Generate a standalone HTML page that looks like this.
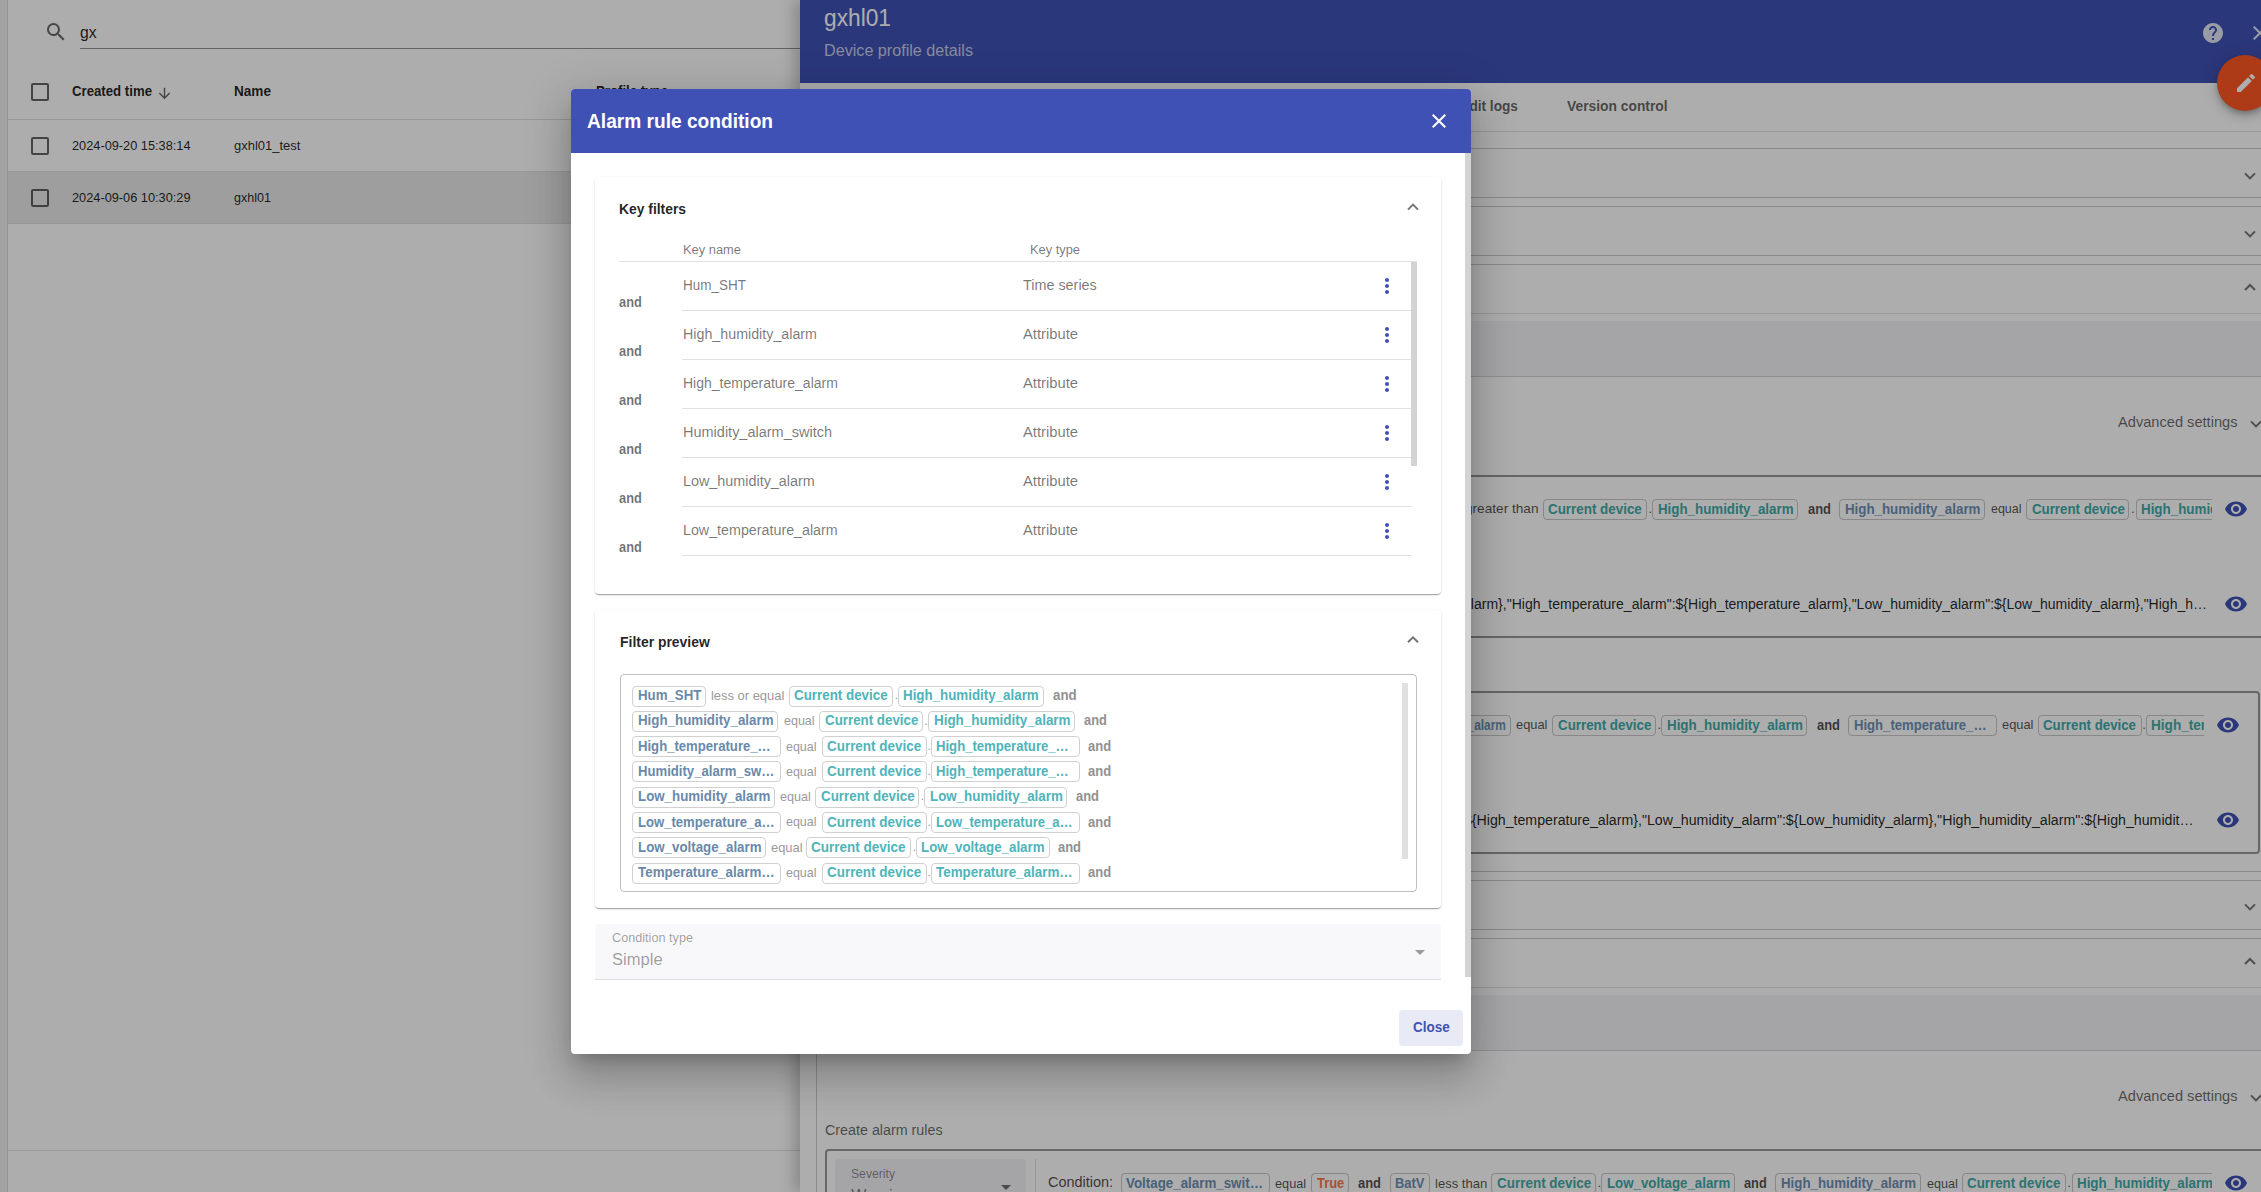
<!DOCTYPE html>
<html><head><meta charset="utf-8"><style>
html,body{margin:0;padding:0;}
body{width:2261px;height:1192px;overflow:hidden;position:relative;background:#fff;font-family:"Liberation Sans",sans-serif;}
.a{position:absolute;box-sizing:border-box;}
.t{position:absolute;white-space:nowrap;}
</style></head><body>
<div class="a" style="left:0px;top:0px;width:7px;height:1192px;background:#f0f0f0"></div><div class="a" style="left:7px;top:0px;width:1px;height:1192px;background:#dcdcdc"></div><svg class="a" style="left:44px;top:20px;" width="24" height="24" viewBox="0 0 24 24"><path fill="rgba(0,0,0,0.6)" d="M15.5 14h-.79l-.28-.27A6.471 6.471 0 0 0 16 9.5 6.5 6.5 0 1 0 9.5 16c1.61 0 3.09-.59 4.23-1.57l.27.28v.79l5 4.99L20.49 19l-4.99-5zm-6 0C7.01 14 5 11.99 5 9.5S7.01 5 9.5 5 14 7.01 14 9.5 11.99 14 9.5 14z"/></svg><div class="t" style="left:80.4px;top:21.8px;font-size:17px;line-height:21px;color:rgba(0,0,0,0.87);transform:scaleX(0.9245);transform-origin:0 0;">gx</div><div class="a" style="left:80px;top:48px;width:720px;height:1px;background:rgba(0,0,0,0.42)"></div><div class="a" style="left:31px;top:83px;width:18px;height:18px;border:2px solid rgba(0,0,0,0.6);border-radius:2px"></div><div class="t" style="left:72.2px;top:82.4px;font-size:14px;line-height:18px;color:rgba(0,0,0,0.87);font-weight:bold;transform:scaleX(0.9433);transform-origin:0 0;">Created time</div><svg class="a" style="left:156px;top:85px;" width="17" height="17" viewBox="0 0 24 24"><path fill="rgba(0,0,0,0.6)" d="M20 12l-1.41-1.41L13 16.17V4h-2v12.17l-5.58-5.59L4 12l8 8 8-8z"/></svg><div class="t" style="left:234.0px;top:82.4px;font-size:14px;line-height:18px;color:rgba(0,0,0,0.87);font-weight:bold;transform:scaleX(0.9703);transform-origin:0 0;">Name</div><div class="t" style="left:596.0px;top:82.4px;font-size:14px;line-height:18px;color:rgba(0,0,0,0.87);font-weight:bold;transform:scaleX(0.9443);transform-origin:0 0;">Profile type</div><div class="a" style="left:8px;top:119px;width:792px;height:1px;background:rgba(0,0,0,0.12)"></div><div class="a" style="left:31px;top:137px;width:18px;height:18px;border:2px solid rgba(0,0,0,0.6);border-radius:2px"></div><div class="t" style="left:72.2px;top:137.1px;font-size:13.7px;line-height:17px;color:rgba(0,0,0,0.87);transform:scaleX(0.9323);transform-origin:0 0;">2024-09-20 15:38:14</div><div class="t" style="left:234.0px;top:137.1px;font-size:13.7px;line-height:17px;color:rgba(0,0,0,0.87);transform:scaleX(0.9476);transform-origin:0 0;">gxhl01_test</div><div class="a" style="left:8px;top:171px;width:792px;height:1px;background:rgba(0,0,0,0.12)"></div><div class="a" style="left:8px;top:172px;width:792px;height:51px;background:#e9e9e9"></div><div class="a" style="left:31px;top:189px;width:18px;height:18px;border:2px solid rgba(0,0,0,0.6);border-radius:2px"></div><div class="t" style="left:72.2px;top:189.3px;font-size:13.7px;line-height:17px;color:rgba(0,0,0,0.87);transform:scaleX(0.9323);transform-origin:0 0;">2024-09-06 10:30:29</div><div class="t" style="left:234.0px;top:189.3px;font-size:13.7px;line-height:17px;color:rgba(0,0,0,0.87);transform:scaleX(0.9165);transform-origin:0 0;">gxhl01</div><div class="a" style="left:8px;top:223px;width:792px;height:1px;background:rgba(0,0,0,0.12)"></div><div class="a" style="left:8px;top:1150px;width:792px;height:1px;background:rgba(0,0,0,0.12)"></div><div class="a" style="left:800px;top:0px;width:1461px;height:1192px;background:#fff;box-shadow:-6px 0 14px rgba(0,0,0,0.22)"></div><div class="a" style="left:800px;top:0px;width:1461px;height:83px;background:#3f51b5"></div><div class="t" style="left:824.2px;top:3.6px;font-size:23px;line-height:29px;color:#fff;transform:scaleX(0.9885);transform-origin:0 0;">gxhl01</div><div class="t" style="left:824.0px;top:41.1px;font-size:16px;line-height:20px;color:rgba(255,255,255,0.72);transform:scaleX(1.0093);transform-origin:0 0;">Device profile details</div><svg class="a" style="left:2201px;top:21px;" width="24" height="24" viewBox="0 0 24 24"><path fill="rgba(255,255,255,0.85)" d="M12 2C6.48 2 2 6.48 2 12s4.48 10 10 10 10-4.48 10-10S17.52 2 12 2zm1 17h-2v-2h2v2zm2.07-7.75l-.9.92C13.45 12.9 13 13.5 13 15h-2v-.5c0-1.1.45-2.1 1.17-2.83l1.24-1.26c.37-.36.59-.86.59-1.41 0-1.1-.9-2-2-2s-2 .9-2 2H8c0-2.21 1.79-4 4-4s4 1.79 4 4c0 .88-.36 1.68-.93 2.25z"/></svg><svg class="a" style="left:2248px;top:21px;" width="24" height="24" viewBox="0 0 24 24"><path fill="rgba(255,255,255,0.85)" d="M19 6.41L17.59 5 12 10.59 6.41 5 5 6.41 10.59 12 5 17.59 6.41 19 12 13.41 17.59 19 19 17.59 13.41 12z"/></svg><div class="a" style="left:800px;top:131px;width:1461px;height:1px;background:rgba(0,0,0,0.12)"></div><div class="t" style="right:743.3px;top:97.2px;font-size:14.5px;line-height:18px;color:rgba(0,0,0,0.62);font-weight:bold;transform:scaleX(0.94);transform-origin:100% 0">Audit logs</div><div class="t" style="left:1566.6px;top:97.2px;font-size:14.5px;line-height:18px;color:rgba(0,0,0,0.62);font-weight:bold;transform:scaleX(0.9531);transform-origin:0 0;">Version control</div><div class="a" style="left:816px;top:148px;width:1445px;height:1px;background:rgba(0,0,0,0.2)"></div><div class="a" style="left:816px;top:197px;width:1445px;height:1px;background:rgba(0,0,0,0.2)"></div><svg class="a" style="left:0;top:0;overflow:visible" width="1" height="1"><polyline points="2245,173.4 2250,178.4 2255,173.4" fill="none" stroke="rgba(0,0,0,0.54)" stroke-width="2"/></svg><div class="a" style="left:816px;top:148px;width:1px;height:49px;background:rgba(0,0,0,0.2)"></div><div class="a" style="left:816px;top:206px;width:1445px;height:1px;background:rgba(0,0,0,0.2)"></div><div class="a" style="left:816px;top:255px;width:1445px;height:1px;background:rgba(0,0,0,0.2)"></div><svg class="a" style="left:0;top:0;overflow:visible" width="1" height="1"><polyline points="2245,231.4 2250,236.4 2255,231.4" fill="none" stroke="rgba(0,0,0,0.54)" stroke-width="2"/></svg><div class="a" style="left:816px;top:206px;width:1px;height:49px;background:rgba(0,0,0,0.2)"></div><div class="a" style="left:816px;top:880px;width:1445px;height:1px;background:rgba(0,0,0,0.2)"></div><div class="a" style="left:816px;top:929px;width:1445px;height:1px;background:rgba(0,0,0,0.2)"></div><svg class="a" style="left:0;top:0;overflow:visible" width="1" height="1"><polyline points="2245,904.4 2250,909.4 2255,904.4" fill="none" stroke="rgba(0,0,0,0.54)" stroke-width="2"/></svg><div class="a" style="left:816px;top:880px;width:1px;height:49px;background:rgba(0,0,0,0.2)"></div><div class="a" style="left:816px;top:264px;width:1445px;height:1px;background:rgba(0,0,0,0.2)"></div><div class="a" style="left:816px;top:313px;width:1445px;height:1px;background:rgba(0,0,0,0.12)"></div><svg class="a" style="left:0;top:0;overflow:visible" width="1" height="1"><polyline points="2245,290.0 2250,285.0 2255,290.0" fill="none" stroke="rgba(0,0,0,0.54)" stroke-width="2"/></svg><div class="a" style="left:816px;top:264px;width:1px;height:607px;background:rgba(0,0,0,0.2)"></div><div class="a" style="left:825px;top:321px;width:1436px;height:56px;background:#f3f3f6;border-bottom:1px solid rgba(0,0,0,0.12)"></div><div class="t" style="left:2117.5px;top:412.3px;font-size:15px;line-height:19px;color:rgba(0,0,0,0.6);transform:scaleX(0.9749);transform-origin:0 0;">Advanced settings</div><svg class="a" style="left:0;top:0;overflow:visible" width="1" height="1"><polyline points="2251,421.4 2256,426.4 2261,421.4" fill="none" stroke="rgba(0,0,0,0.54)" stroke-width="2"/></svg><div class="t" style="left:824.7px;top:447.2px;font-size:14px;line-height:18px;color:rgba(0,0,0,0.6);transform:scaleX(1.0212);transform-origin:0 0;">Create alarm rules</div><div class="a" style="left:816px;top:871px;width:1445px;height:1px;background:rgba(0,0,0,0.2)"></div><div class="a" style="left:816px;top:938px;width:1445px;height:1px;background:rgba(0,0,0,0.2)"></div><div class="a" style="left:816px;top:987px;width:1445px;height:1px;background:rgba(0,0,0,0.12)"></div><svg class="a" style="left:0;top:0;overflow:visible" width="1" height="1"><polyline points="2245,964.0 2250,959.0 2255,964.0" fill="none" stroke="rgba(0,0,0,0.54)" stroke-width="2"/></svg><div class="a" style="left:816px;top:938px;width:1px;height:254px;background:rgba(0,0,0,0.2)"></div><div class="a" style="left:825px;top:995px;width:1436px;height:56px;background:#f3f3f6;border-bottom:1px solid rgba(0,0,0,0.12)"></div><div class="t" style="left:2117.5px;top:1086.3px;font-size:15px;line-height:19px;color:rgba(0,0,0,0.6);transform:scaleX(0.9749);transform-origin:0 0;">Advanced settings</div><svg class="a" style="left:0;top:0;overflow:visible" width="1" height="1"><polyline points="2251,1095.4 2256,1100.4 2261,1095.4" fill="none" stroke="rgba(0,0,0,0.54)" stroke-width="2"/></svg><div class="t" style="left:824.7px;top:1121.2px;font-size:14px;line-height:18px;color:rgba(0,0,0,0.6);transform:scaleX(1.0212);transform-origin:0 0;">Create alarm rules</div><div class="t" style="left:1465.0px;top:501.4px;font-size:13px;line-height:16px;color:rgba(0,0,0,0.7);transform:scaleX(1.0484);transform-origin:0 0;">greater than</div><div class="a" style="left:1543px;top:499px;width:104px;height:21px;border:1px solid rgba(0,0,0,0.22);border-radius:4px;overflow:hidden"></div><div class="t" style="left:1548.4px;top:499.5px;font-size:14px;line-height:18px;color:#42aaa8;font-weight:bold;transform:scaleX(0.9568);transform-origin:0 0;">Current device</div><div class="t" style="left:1648.6px;top:500.9px;font-size:13px;line-height:16px;color:rgba(0,0,0,0.7);">.</div><div class="a" style="left:1652px;top:499px;width:146px;height:21px;border:1px solid rgba(0,0,0,0.22);border-radius:4px;overflow:hidden"></div><div class="t" style="left:1657.6px;top:499.5px;font-size:14px;line-height:18px;color:#42aaa8;font-weight:bold;transform:scaleX(0.9518);transform-origin:0 0;">High_humidity_alarm</div><div class="t" style="left:1807.5px;top:499.5px;font-size:14px;line-height:18px;color:rgba(0,0,0,0.7);font-weight:bold;transform:scaleX(0.9240);transform-origin:0 0;">and</div><div class="a" style="left:1839px;top:499px;width:146px;height:21px;border:1px solid rgba(0,0,0,0.22);border-radius:4px;overflow:hidden"></div><div class="t" style="left:1844.5px;top:499.5px;font-size:14px;line-height:18px;color:#6f8fb3;font-weight:bold;transform:scaleX(0.9511);transform-origin:0 0;">High_humidity_alarm</div><div class="t" style="left:1990.7px;top:501.4px;font-size:13px;line-height:16px;color:rgba(0,0,0,0.7);transform:scaleX(0.9588);transform-origin:0 0;">equal</div><div class="a" style="left:2026px;top:499px;width:103px;height:21px;border:1px solid rgba(0,0,0,0.22);border-radius:4px;overflow:hidden"></div><div class="t" style="left:2031.7px;top:499.5px;font-size:14px;line-height:18px;color:#42aaa8;font-weight:bold;transform:scaleX(0.9486);transform-origin:0 0;">Current device</div><div class="t" style="left:2131.0px;top:500.9px;font-size:13px;line-height:16px;color:rgba(0,0,0,0.7);">.</div><div class="a" style="left:2135.6px;top:499px;width:76.40000000000009px;height:21px;border:1px solid rgba(0,0,0,0.22);border-right:none;border-radius:4px 0 0 4px"></div><div class="a" style="left:2135.6px;top:497px;width:76.40000000000009px;height:25px;overflow:hidden"><div class="t" style="left:5.0px;top:2.5px;font-size:14px;line-height:18px;color:#42aaa8;font-weight:bold;transform:scaleX(0.9553);transform-origin:0 0;">High_humidity_alarm</div></div><svg class="a" style="left:2224px;top:497px;" width="24" height="24" viewBox="0 0 24 24"><path fill="#3f51b5" d="M12 4.5C7 4.5 2.73 7.61 1 12c1.73 4.39 6 7.5 11 7.5s9.27-3.11 11-7.5c-1.73-4.39-6-7.5-11-7.5zM12 17c-2.76 0-5-2.24-5-5s2.24-5 5-5 5 2.24 5 5-2.24 5-5 5zm0-8c-1.66 0-3 1.34-3 3s1.34 3 3 3 3-1.34 3-3-1.34-3-3-3z"/></svg><div class="t" style="left:1000.0px;top:595.1px;width:1207.0px;height:18px;overflow:hidden;font-size:14px;line-height:18px;color:rgba(0,0,0,0.87);"><div style="position:absolute;right:0;top:0;transform:scaleX(1.0012);transform-origin:100% 0">"Low_humidity_alarm":${Low_humidity_alarm},"Voltage_alarm":${Voltage_alarm},"High_temperature_alarm":${High_temperature_alarm},"Low_humidity_alarm":${Low_humidity_alarm},"High_h…</div></div><svg class="a" style="left:2224px;top:592px;" width="24" height="24" viewBox="0 0 24 24"><path fill="#3f51b5" d="M12 4.5C7 4.5 2.73 7.61 1 12c1.73 4.39 6 7.5 11 7.5s9.27-3.11 11-7.5c-1.73-4.39-6-7.5-11-7.5zM12 17c-2.76 0-5-2.24-5-5s2.24-5 5-5 5 2.24 5 5-2.24 5-5 5zm0-8c-1.66 0-3 1.34-3 3s1.34 3 3 3 3-1.34 3-3-1.34-3-3-3z"/></svg><div class="a" style="left:825px;top:475px;width:1600px;height:163px;border:2px solid rgba(0,0,0,0.4);border-radius:4px"></div><div class="a" style="left:825px;top:691px;width:1435px;height:163px;border:2px solid rgba(0,0,0,0.4);border-radius:4px"></div><div class="a" style="left:825px;top:1149px;width:1600px;height:200px;border:2px solid rgba(0,0,0,0.4);border-radius:4px"></div><div class="a" style="left:1380px;top:715px;width:131px;height:21px;border:1px solid rgba(0,0,0,0.22);border-radius:4px;overflow:hidden"></div><div class="t" style="left:1385.0px;top:715.5px;font-size:14px;line-height:18px;color:#6f8fb3;font-weight:bold;transform:scaleX(0.8492);transform-origin:0 0;">High_humidity_alarm</div><div class="t" style="left:1516.3px;top:717.4px;font-size:13px;line-height:16px;color:rgba(0,0,0,0.7);transform:scaleX(0.9871);transform-origin:0 0;">equal</div><div class="a" style="left:1552px;top:715px;width:104px;height:21px;border:1px solid rgba(0,0,0,0.22);border-radius:4px;overflow:hidden"></div><div class="t" style="left:1557.6px;top:715.5px;font-size:14px;line-height:18px;color:#42aaa8;font-weight:bold;transform:scaleX(0.9527);transform-origin:0 0;">Current device</div><div class="t" style="left:1657.5px;top:716.9px;font-size:13px;line-height:16px;color:rgba(0,0,0,0.7);">.</div><div class="a" style="left:1661px;top:715px;width:146px;height:21px;border:1px solid rgba(0,0,0,0.22);border-radius:4px;overflow:hidden"></div><div class="t" style="left:1666.5px;top:715.5px;font-size:14px;line-height:18px;color:#42aaa8;font-weight:bold;transform:scaleX(0.9539);transform-origin:0 0;">High_humidity_alarm</div><div class="t" style="left:1816.7px;top:715.5px;font-size:14px;line-height:18px;color:rgba(0,0,0,0.7);font-weight:bold;transform:scaleX(0.9240);transform-origin:0 0;">and</div><div class="a" style="left:1848px;top:715px;width:149px;height:21px;border:1px solid rgba(0,0,0,0.22);border-radius:4px;overflow:hidden"></div><div class="t" style="left:1853.5px;top:715.5px;font-size:14px;line-height:18px;color:#6f8fb3;font-weight:bold;transform:scaleX(0.9358);transform-origin:0 0;">High_temperature_…</div><div class="t" style="left:2001.6px;top:717.4px;font-size:13px;line-height:16px;color:rgba(0,0,0,0.7);transform:scaleX(0.9871);transform-origin:0 0;">equal</div><div class="a" style="left:2038px;top:715px;width:104px;height:21px;border:1px solid rgba(0,0,0,0.22);border-radius:4px;overflow:hidden"></div><div class="t" style="left:2042.8px;top:715.5px;font-size:14px;line-height:18px;color:#42aaa8;font-weight:bold;transform:scaleX(0.9486);transform-origin:0 0;">Current device</div><div class="t" style="left:2142.3px;top:716.9px;font-size:13px;line-height:16px;color:rgba(0,0,0,0.7);">.</div><div class="a" style="left:2146.4px;top:715px;width:57.59999999999991px;height:21px;border:1px solid rgba(0,0,0,0.22);border-right:none;border-radius:4px 0 0 4px"></div><div class="a" style="left:2146.4px;top:713px;width:57.59999999999991px;height:25px;overflow:hidden"><div class="t" style="left:5.0px;top:2.5px;font-size:14px;line-height:18px;color:#42aaa8;font-weight:bold;transform:scaleX(0.9700);transform-origin:0 0;">High_temperature_alarm</div></div><svg class="a" style="left:2216px;top:713px;" width="24" height="24" viewBox="0 0 24 24"><path fill="#3f51b5" d="M12 4.5C7 4.5 2.73 7.61 1 12c1.73 4.39 6 7.5 11 7.5s9.27-3.11 11-7.5c-1.73-4.39-6-7.5-11-7.5zM12 17c-2.76 0-5-2.24-5-5s2.24-5 5-5 5 2.24 5 5-2.24 5-5 5zm0-8c-1.66 0-3 1.34-3 3s1.34 3 3 3 3-1.34 3-3-1.34-3-3-3z"/></svg><div class="t" style="left:1000.0px;top:811.1px;width:1194.0px;height:18px;overflow:hidden;font-size:14px;line-height:18px;color:rgba(0,0,0,0.87);"><div style="position:absolute;right:0;top:0;transform:scaleX(1.0122);transform-origin:100% 0">"High_temperature_alarm":${High_temperature_alarm},"Low_humidity_alarm":${Low_humidity_alarm},"High_humidity_alarm":${High_humidit…</div></div><svg class="a" style="left:2216px;top:808px;" width="24" height="24" viewBox="0 0 24 24"><path fill="#3f51b5" d="M12 4.5C7 4.5 2.73 7.61 1 12c1.73 4.39 6 7.5 11 7.5s9.27-3.11 11-7.5c-1.73-4.39-6-7.5-11-7.5zM12 17c-2.76 0-5-2.24-5-5s2.24-5 5-5 5 2.24 5 5-2.24 5-5 5zm0-8c-1.66 0-3 1.34-3 3s1.34 3 3 3 3-1.34 3-3-1.34-3-3-3z"/></svg><div class="a" style="left:835px;top:1159px;width:191px;height:60px;background:#f3f3f6;border-radius:4px 4px 0 0"></div><div class="t" style="left:851.3px;top:1166.8px;font-size:12px;line-height:15px;color:rgba(0,0,0,0.45);transform:scaleX(1.0150);transform-origin:0 0;">Severity</div><div class="t" style="left:851.3px;top:1185.5px;font-size:16px;line-height:20px;color:rgba(0,0,0,0.5);">Warning</div><svg class="a" style="left:999px;top:1184px" width="14" height="8"><polygon points="2,1 12,1 7,6" fill="rgba(0,0,0,0.54)"/></svg><div class="a" style="left:1035px;top:1159px;width:1px;height:33px;background:rgba(0,0,0,0.12)"></div><div class="t" style="left:1047.7px;top:1173.1px;font-size:14px;line-height:18px;color:rgba(0,0,0,0.72);transform:scaleX(1.0310);transform-origin:0 0;">Condition:</div><div class="a" style="left:1121px;top:1173.2px;width:149px;height:21px;border:1px solid rgba(0,0,0,0.22);border-radius:4px;overflow:hidden"></div><div class="t" style="left:1126.4px;top:1173.7px;font-size:14px;line-height:18px;color:#6f8fb3;font-weight:bold;transform:scaleX(0.9535);transform-origin:0 0;">Voltage_alarm_swit…</div><div class="t" style="left:1275.4px;top:1175.6px;font-size:13px;line-height:16px;color:rgba(0,0,0,0.7);transform:scaleX(0.9777);transform-origin:0 0;">equal</div><div class="a" style="left:1311px;top:1173.2px;width:38px;height:21px;border:1px solid rgba(0,0,0,0.22);border-radius:4px;overflow:hidden"></div><div class="t" style="left:1316.6px;top:1173.7px;font-size:14px;line-height:18px;color:#f4784a;font-weight:bold;transform:scaleX(0.9200);transform-origin:0 0;">True</div><div class="t" style="left:1358.4px;top:1173.7px;font-size:14px;line-height:18px;color:rgba(0,0,0,0.7);font-weight:bold;transform:scaleX(0.9240);transform-origin:0 0;">and</div><div class="a" style="left:1390px;top:1173.2px;width:40px;height:21px;border:1px solid rgba(0,0,0,0.22);border-radius:4px;overflow:hidden"></div><div class="t" style="left:1395.3px;top:1173.7px;font-size:14px;line-height:18px;color:#6f8fb3;font-weight:bold;transform:scaleX(0.9217);transform-origin:0 0;">BatV</div><div class="t" style="left:1435.0px;top:1175.6px;font-size:13px;line-height:16px;color:rgba(0,0,0,0.7);transform:scaleX(1.0032);transform-origin:0 0;">less than</div><div class="a" style="left:1491px;top:1173.2px;width:105px;height:21px;border:1px solid rgba(0,0,0,0.22);border-radius:4px;overflow:hidden"></div><div class="t" style="left:1496.5px;top:1173.7px;font-size:14px;line-height:18px;color:#42aaa8;font-weight:bold;transform:scaleX(0.9619);transform-origin:0 0;">Current device</div><div class="t" style="left:1597.5px;top:1175.1px;font-size:13px;line-height:16px;color:rgba(0,0,0,0.7);">.</div><div class="a" style="left:1601px;top:1173.2px;width:134px;height:21px;border:1px solid rgba(0,0,0,0.22);border-radius:4px;overflow:hidden"></div><div class="t" style="left:1606.6px;top:1173.7px;font-size:14px;line-height:18px;color:#42aaa8;font-weight:bold;transform:scaleX(0.9489);transform-origin:0 0;">Low_voltage_alarm</div><div class="t" style="left:1743.7px;top:1173.7px;font-size:14px;line-height:18px;color:rgba(0,0,0,0.7);font-weight:bold;transform:scaleX(0.9120);transform-origin:0 0;">and</div><div class="a" style="left:1775px;top:1173.2px;width:146px;height:21px;border:1px solid rgba(0,0,0,0.22);border-radius:4px;overflow:hidden"></div><div class="t" style="left:1780.6px;top:1173.7px;font-size:14px;line-height:18px;color:#6f8fb3;font-weight:bold;transform:scaleX(0.9490);transform-origin:0 0;">High_humidity_alarm</div><div class="t" style="left:1926.8px;top:1175.6px;font-size:13px;line-height:16px;color:rgba(0,0,0,0.7);transform:scaleX(0.9651);transform-origin:0 0;">equal</div><div class="a" style="left:1962px;top:1173.2px;width:104px;height:21px;border:1px solid rgba(0,0,0,0.22);border-radius:4px;overflow:hidden"></div><div class="t" style="left:1967.4px;top:1173.7px;font-size:14px;line-height:18px;color:#42aaa8;font-weight:bold;transform:scaleX(0.9527);transform-origin:0 0;">Current device</div><div class="t" style="left:2067.3px;top:1175.1px;font-size:13px;line-height:16px;color:rgba(0,0,0,0.7);">.</div><div class="a" style="left:2071.6px;top:1173.2px;width:140.70000000000027px;height:21px;border:1px solid rgba(0,0,0,0.22);border-right:none;border-radius:4px 0 0 4px"></div><div class="a" style="left:2071.6px;top:1171.2px;width:140.70000000000027px;height:25px;overflow:hidden"><div class="t" style="left:5.0px;top:2.5px;font-size:14px;line-height:18px;color:#42aaa8;font-weight:bold;transform:scaleX(0.9553);transform-origin:0 0;">High_humidity_alarm</div></div><svg class="a" style="left:2224px;top:1171px;" width="24" height="24" viewBox="0 0 24 24"><path fill="#3f51b5" d="M12 4.5C7 4.5 2.73 7.61 1 12c1.73 4.39 6 7.5 11 7.5s9.27-3.11 11-7.5c-1.73-4.39-6-7.5-11-7.5zM12 17c-2.76 0-5-2.24-5-5s2.24-5 5-5 5 2.24 5 5-2.24 5-5 5zm0-8c-1.66 0-3 1.34-3 3s1.34 3 3 3 3-1.34 3-3-1.34-3-3-3z"/></svg><div class="a" style="left:2217px;top:55px;width:56px;height:56px;border-radius:50%;background:#ff5722;box-shadow:0 3px 5px -1px rgba(0,0,0,.2),0 6px 10px 0 rgba(0,0,0,.14),0 1px 18px 0 rgba(0,0,0,.12)"></div><svg class="a" style="left:2233.5px;top:71px;" width="24" height="24" viewBox="0 0 24 24"><path fill="#fff" d="M3 17.25V21h3.75L17.81 9.94l-3.75-3.75L3 17.25zM20.71 7.04a.996.996 0 0 0 0-1.41l-2.34-2.34a.996.996 0 0 0-1.41 0l-1.83 1.83 3.75 3.75 1.83-1.83z"/></svg><div class="a" style="left:0px;top:0px;width:2261px;height:1192px;background:rgba(0,0,0,0.32)"></div><div class="a" style="left:571px;top:89px;width:900px;height:965px;background:#fff;border-radius:4px;overflow:hidden;box-shadow:0 11px 15px -7px rgba(0,0,0,.2),0 24px 38px 3px rgba(0,0,0,.14),0 9px 46px 8px rgba(0,0,0,.12)"></div><div class="a" style="left:571px;top:89px;width:900px;height:64px;background:#3f51b5;border-radius:4px 4px 0 0"></div><div class="t" style="left:586.9px;top:108.7px;font-size:20px;line-height:25px;color:#fff;font-weight:bold;transform:scaleX(0.9565);transform-origin:0 0;">Alarm rule condition</div><svg class="a" style="left:1427px;top:109px;" width="24" height="24" viewBox="0 0 24 24"><path fill="#fff" d="M19 6.41L17.59 5 12 10.59 6.41 5 5 6.41 10.59 12 5 17.59 6.41 19 12 13.41 17.59 19 19 17.59 13.41 12z"/></svg><div class="a" style="left:1465px;top:153px;width:6px;height:824px;background:#d3d3d3"></div><div class="a" style="left:595px;top:177px;width:846px;height:417px;background:#fff;border-radius:4px;box-shadow:0 2px 1px -1px rgba(0,0,0,.2),0 1px 1px 0 rgba(0,0,0,.14),0 1px 3px 0 rgba(0,0,0,.12)"></div><div class="t" style="left:619.4px;top:198.6px;font-size:15px;line-height:19px;color:rgba(0,0,0,0.87);font-weight:bold;transform:scaleX(0.9237);transform-origin:0 0;">Key filters</div><svg class="a" style="left:0;top:0;overflow:visible" width="1" height="1"><polyline points="1408,209.6 1413,204.6 1418,209.6" fill="none" stroke="rgba(0,0,0,0.54)" stroke-width="2"/></svg><div class="t" style="left:683.0px;top:243.3px;font-size:12px;line-height:15px;color:rgba(0,0,0,0.54);transform:scaleX(1.0735);transform-origin:0 0;">Key name</div><div class="t" style="left:1030.0px;top:243.3px;font-size:12px;line-height:15px;color:rgba(0,0,0,0.54);transform:scaleX(1.0708);transform-origin:0 0;">Key type</div><div class="a" style="left:619px;top:261px;width:798px;height:1px;background:rgba(0,0,0,0.12)"></div><div class="a" style="left:1411px;top:262px;width:6px;height:204px;background:#d3d3d3"></div><div class="t" style="left:683.0px;top:276.1px;font-size:14px;line-height:18px;color:rgba(0,0,0,0.54);transform:scaleX(0.9641);transform-origin:0 0;">Hum_SHT</div><div class="t" style="left:1023.3px;top:276.1px;font-size:14px;line-height:18px;color:rgba(0,0,0,0.54);transform:scaleX(1.0275);transform-origin:0 0;">Time series</div><div class="t" style="left:619.4px;top:292.8px;font-size:14px;line-height:18px;color:rgba(0,0,0,0.56);font-weight:bold;transform:scaleX(0.9160);transform-origin:0 0;">and</div><div class="a" style="left:682px;top:310px;width:729px;height:1px;background:rgba(0,0,0,0.12)"></div><svg class="a" style="left:1375px;top:274px;" width="24" height="24" viewBox="0 0 24 24"><path fill="#3f51b5" d="M12 8c1.1 0 2-.9 2-2s-.9-2-2-2-2 .9-2 2 .9 2 2 2zm0 2c-1.1 0-2 .9-2 2s.9 2 2 2 2-.9 2-2-.9-2-2-2zm0 6c-1.1 0-2 .9-2 2s.9 2 2 2 2-.9 2-2-.9-2-2-2z"/></svg><div class="t" style="left:683.0px;top:325.1px;font-size:14px;line-height:18px;color:rgba(0,0,0,0.54);transform:scaleX(1.0189);transform-origin:0 0;">High_humidity_alarm</div><div class="t" style="left:1023.3px;top:325.1px;font-size:14px;line-height:18px;color:rgba(0,0,0,0.54);transform:scaleX(1.0549);transform-origin:0 0;">Attribute</div><div class="t" style="left:619.4px;top:341.8px;font-size:14px;line-height:18px;color:rgba(0,0,0,0.56);font-weight:bold;transform:scaleX(0.9160);transform-origin:0 0;">and</div><div class="a" style="left:682px;top:359px;width:729px;height:1px;background:rgba(0,0,0,0.12)"></div><svg class="a" style="left:1375px;top:323px;" width="24" height="24" viewBox="0 0 24 24"><path fill="#3f51b5" d="M12 8c1.1 0 2-.9 2-2s-.9-2-2-2-2 .9-2 2 .9 2 2 2zm0 2c-1.1 0-2 .9-2 2s.9 2 2 2 2-.9 2-2-.9-2-2-2zm0 6c-1.1 0-2 .9-2 2s.9 2 2 2 2-.9 2-2-.9-2-2-2z"/></svg><div class="t" style="left:683.0px;top:374.1px;font-size:14px;line-height:18px;color:rgba(0,0,0,0.54);">High_temperature_alarm</div><div class="t" style="left:1023.3px;top:374.1px;font-size:14px;line-height:18px;color:rgba(0,0,0,0.54);transform:scaleX(1.0549);transform-origin:0 0;">Attribute</div><div class="t" style="left:619.4px;top:390.8px;font-size:14px;line-height:18px;color:rgba(0,0,0,0.56);font-weight:bold;transform:scaleX(0.9160);transform-origin:0 0;">and</div><div class="a" style="left:682px;top:408px;width:729px;height:1px;background:rgba(0,0,0,0.12)"></div><svg class="a" style="left:1375px;top:372px;" width="24" height="24" viewBox="0 0 24 24"><path fill="#3f51b5" d="M12 8c1.1 0 2-.9 2-2s-.9-2-2-2-2 .9-2 2 .9 2 2 2zm0 2c-1.1 0-2 .9-2 2s.9 2 2 2 2-.9 2-2-.9-2-2-2zm0 6c-1.1 0-2 .9-2 2s.9 2 2 2 2-.9 2-2-.9-2-2-2z"/></svg><div class="t" style="left:683.0px;top:423.1px;font-size:14px;line-height:18px;color:rgba(0,0,0,0.54);transform:scaleX(1.0352);transform-origin:0 0;">Humidity_alarm_switch</div><div class="t" style="left:1023.3px;top:423.1px;font-size:14px;line-height:18px;color:rgba(0,0,0,0.54);transform:scaleX(1.0549);transform-origin:0 0;">Attribute</div><div class="t" style="left:619.4px;top:439.8px;font-size:14px;line-height:18px;color:rgba(0,0,0,0.56);font-weight:bold;transform:scaleX(0.9160);transform-origin:0 0;">and</div><div class="a" style="left:682px;top:457px;width:729px;height:1px;background:rgba(0,0,0,0.12)"></div><svg class="a" style="left:1375px;top:421px;" width="24" height="24" viewBox="0 0 24 24"><path fill="#3f51b5" d="M12 8c1.1 0 2-.9 2-2s-.9-2-2-2-2 .9-2 2 .9 2 2 2zm0 2c-1.1 0-2 .9-2 2s.9 2 2 2 2-.9 2-2-.9-2-2-2zm0 6c-1.1 0-2 .9-2 2s.9 2 2 2 2-.9 2-2-.9-2-2-2z"/></svg><div class="t" style="left:683.0px;top:472.1px;font-size:14px;line-height:18px;color:rgba(0,0,0,0.54);transform:scaleX(1.0265);transform-origin:0 0;">Low_humidity_alarm</div><div class="t" style="left:1023.3px;top:472.1px;font-size:14px;line-height:18px;color:rgba(0,0,0,0.54);transform:scaleX(1.0549);transform-origin:0 0;">Attribute</div><div class="t" style="left:619.4px;top:488.8px;font-size:14px;line-height:18px;color:rgba(0,0,0,0.56);font-weight:bold;transform:scaleX(0.9160);transform-origin:0 0;">and</div><div class="a" style="left:682px;top:506px;width:729px;height:1px;background:rgba(0,0,0,0.12)"></div><svg class="a" style="left:1375px;top:470px;" width="24" height="24" viewBox="0 0 24 24"><path fill="#3f51b5" d="M12 8c1.1 0 2-.9 2-2s-.9-2-2-2-2 .9-2 2 .9 2 2 2zm0 2c-1.1 0-2 .9-2 2s.9 2 2 2 2-.9 2-2-.9-2-2-2zm0 6c-1.1 0-2 .9-2 2s.9 2 2 2 2-.9 2-2-.9-2-2-2z"/></svg><div class="t" style="left:683.0px;top:521.1px;font-size:14px;line-height:18px;color:rgba(0,0,0,0.54);transform:scaleX(1.0194);transform-origin:0 0;">Low_temperature_alarm</div><div class="t" style="left:1023.3px;top:521.1px;font-size:14px;line-height:18px;color:rgba(0,0,0,0.54);transform:scaleX(1.0549);transform-origin:0 0;">Attribute</div><div class="t" style="left:619.4px;top:537.8px;font-size:14px;line-height:18px;color:rgba(0,0,0,0.56);font-weight:bold;transform:scaleX(0.9160);transform-origin:0 0;">and</div><div class="a" style="left:682px;top:555px;width:729px;height:1px;background:rgba(0,0,0,0.12)"></div><svg class="a" style="left:1375px;top:519px;" width="24" height="24" viewBox="0 0 24 24"><path fill="#3f51b5" d="M12 8c1.1 0 2-.9 2-2s-.9-2-2-2-2 .9-2 2 .9 2 2 2zm0 2c-1.1 0-2 .9-2 2s.9 2 2 2 2-.9 2-2-.9-2-2-2zm0 6c-1.1 0-2 .9-2 2s.9 2 2 2 2-.9 2-2-.9-2-2-2z"/></svg><div class="a" style="left:595px;top:610px;width:846px;height:298px;background:#fff;border-radius:4px;box-shadow:0 2px 1px -1px rgba(0,0,0,.2),0 1px 1px 0 rgba(0,0,0,.14),0 1px 3px 0 rgba(0,0,0,.12)"></div><div class="t" style="left:619.5px;top:631.5px;font-size:15px;line-height:19px;color:rgba(0,0,0,0.87);font-weight:bold;transform:scaleX(0.9286);transform-origin:0 0;">Filter preview</div><svg class="a" style="left:0;top:0;overflow:visible" width="1" height="1"><polyline points="1408,642.3000000000001 1413,637.3000000000001 1418,642.3000000000001" fill="none" stroke="rgba(0,0,0,0.54)" stroke-width="2"/></svg><div class="a" style="left:620px;top:674px;width:797px;height:218px;border:1px solid rgba(0,0,0,0.25);border-radius:4px"></div><div class="a" style="left:1402px;top:683px;width:6px;height:176px;background:#e0e0e0"></div><div class="a" style="left:632px;top:685.5px;width:74px;height:21px;border:1px solid #d0d0d0;border-radius:4px;overflow:hidden"></div><div class="t" style="left:637.6px;top:686.0px;font-size:14px;line-height:18px;color:#6a89aa;font-weight:bold;transform:scaleX(0.9477);transform-origin:0 0;">Hum_SHT</div><div class="t" style="left:710.7px;top:687.9px;font-size:13px;line-height:16px;color:#9a9a9a;transform:scaleX(0.9944);transform-origin:0 0;">less or equal</div><div class="a" style="left:789px;top:685.5px;width:104px;height:21px;border:1px solid #d0d0d0;border-radius:4px;overflow:hidden"></div><div class="t" style="left:794.4px;top:686.0px;font-size:14px;line-height:18px;color:#4fb4b9;font-weight:bold;transform:scaleX(0.9548);transform-origin:0 0;">Current device</div><div class="t" style="left:894.7px;top:688.2px;font-size:12px;line-height:15px;color:#9a9a9a;">.</div><div class="a" style="left:898px;top:685.5px;width:146px;height:21px;border:1px solid #d0d0d0;border-radius:4px;overflow:hidden"></div><div class="t" style="left:903.4px;top:686.0px;font-size:14px;line-height:18px;color:#4fb4b9;font-weight:bold;transform:scaleX(0.9532);transform-origin:0 0;">High_humidity_alarm</div><div class="t" style="left:1053.0px;top:686.0px;font-size:14px;line-height:18px;color:#919191;font-weight:bold;transform:scaleX(0.9482);transform-origin:0 0;">and</div><div class="a" style="left:632px;top:710.8px;width:146px;height:21px;border:1px solid #d0d0d0;border-radius:4px;overflow:hidden"></div><div class="t" style="left:637.6px;top:711.3px;font-size:14px;line-height:18px;color:#6a89aa;font-weight:bold;transform:scaleX(0.9518);transform-origin:0 0;">High_humidity_alarm</div><div class="t" style="left:783.6px;top:713.2px;font-size:13px;line-height:16px;color:#9a9a9a;transform:scaleX(0.9620);transform-origin:0 0;">equal</div><div class="a" style="left:819px;top:710.8px;width:104px;height:21px;border:1px solid #d0d0d0;border-radius:4px;overflow:hidden"></div><div class="t" style="left:824.5px;top:711.3px;font-size:14px;line-height:18px;color:#4fb4b9;font-weight:bold;transform:scaleX(0.9527);transform-origin:0 0;">Current device</div><div class="t" style="left:924.6px;top:713.5px;font-size:12px;line-height:15px;color:#9a9a9a;">.</div><div class="a" style="left:928px;top:710.8px;width:147px;height:21px;border:1px solid #d0d0d0;border-radius:4px;overflow:hidden"></div><div class="t" style="left:933.5px;top:711.3px;font-size:14px;line-height:18px;color:#4fb4b9;font-weight:bold;transform:scaleX(0.9588);transform-origin:0 0;">High_humidity_alarm</div><div class="t" style="left:1083.7px;top:711.3px;font-size:14px;line-height:18px;color:#919191;font-weight:bold;transform:scaleX(0.9160);transform-origin:0 0;">and</div><div class="a" style="left:632px;top:736.1px;width:149px;height:21px;border:1px solid #d0d0d0;border-radius:4px;overflow:hidden"></div><div class="t" style="left:637.6px;top:736.6px;font-size:14px;line-height:18px;color:#6a89aa;font-weight:bold;transform:scaleX(0.9372);transform-origin:0 0;">High_temperature_…</div><div class="t" style="left:786.3px;top:738.5px;font-size:13px;line-height:16px;color:#9a9a9a;transform:scaleX(0.9588);transform-origin:0 0;">equal</div><div class="a" style="left:822px;top:736.1px;width:105px;height:21px;border:1px solid #d0d0d0;border-radius:4px;overflow:hidden"></div><div class="t" style="left:826.7px;top:736.6px;font-size:14px;line-height:18px;color:#4fb4b9;font-weight:bold;transform:scaleX(0.9599);transform-origin:0 0;">Current device</div><div class="t" style="left:927.5px;top:738.8px;font-size:12px;line-height:15px;color:#9a9a9a;">.</div><div class="a" style="left:931px;top:736.1px;width:149px;height:21px;border:1px solid #d0d0d0;border-radius:4px;overflow:hidden"></div><div class="t" style="left:936.4px;top:736.6px;font-size:14px;line-height:18px;color:#4fb4b9;font-weight:bold;transform:scaleX(0.9372);transform-origin:0 0;">High_temperature_…</div><div class="t" style="left:1088.4px;top:736.6px;font-size:14px;line-height:18px;color:#919191;font-weight:bold;transform:scaleX(0.9281);transform-origin:0 0;">and</div><div class="a" style="left:632px;top:761.4px;width:149px;height:21px;border:1px solid #d0d0d0;border-radius:4px;overflow:hidden"></div><div class="t" style="left:637.6px;top:761.9px;font-size:14px;line-height:18px;color:#6a89aa;font-weight:bold;transform:scaleX(0.9375);transform-origin:0 0;">Humidity_alarm_sw…</div><div class="t" style="left:786.3px;top:763.8px;font-size:13px;line-height:16px;color:#9a9a9a;transform:scaleX(0.9588);transform-origin:0 0;">equal</div><div class="a" style="left:822px;top:761.4px;width:105px;height:21px;border:1px solid #d0d0d0;border-radius:4px;overflow:hidden"></div><div class="t" style="left:826.7px;top:761.9px;font-size:14px;line-height:18px;color:#4fb4b9;font-weight:bold;transform:scaleX(0.9599);transform-origin:0 0;">Current device</div><div class="t" style="left:927.5px;top:764.1px;font-size:12px;line-height:15px;color:#9a9a9a;">.</div><div class="a" style="left:931px;top:761.4px;width:149px;height:21px;border:1px solid #d0d0d0;border-radius:4px;overflow:hidden"></div><div class="t" style="left:936.4px;top:761.9px;font-size:14px;line-height:18px;color:#4fb4b9;font-weight:bold;transform:scaleX(0.9372);transform-origin:0 0;">High_temperature_…</div><div class="t" style="left:1088.4px;top:761.9px;font-size:14px;line-height:18px;color:#919191;font-weight:bold;transform:scaleX(0.9281);transform-origin:0 0;">and</div><div class="a" style="left:632px;top:786.7px;width:143px;height:21px;border:1px solid #d0d0d0;border-radius:4px;overflow:hidden"></div><div class="t" style="left:637.6px;top:787.2px;font-size:14px;line-height:18px;color:#6a89aa;font-weight:bold;transform:scaleX(0.9508);transform-origin:0 0;">Low_humidity_alarm</div><div class="t" style="left:779.7px;top:789.1px;font-size:13px;line-height:16px;color:#9a9a9a;transform:scaleX(0.9714);transform-origin:0 0;">equal</div><div class="a" style="left:815px;top:786.7px;width:104px;height:21px;border:1px solid #d0d0d0;border-radius:4px;overflow:hidden"></div><div class="t" style="left:820.5px;top:787.2px;font-size:14px;line-height:18px;color:#4fb4b9;font-weight:bold;transform:scaleX(0.9548);transform-origin:0 0;">Current device</div><div class="t" style="left:920.8px;top:789.4px;font-size:12px;line-height:15px;color:#9a9a9a;">.</div><div class="a" style="left:924px;top:786.7px;width:143px;height:21px;border:1px solid #d0d0d0;border-radius:4px;overflow:hidden"></div><div class="t" style="left:929.5px;top:787.2px;font-size:14px;line-height:18px;color:#4fb4b9;font-weight:bold;transform:scaleX(0.9536);transform-origin:0 0;">Low_humidity_alarm</div><div class="t" style="left:1075.5px;top:787.2px;font-size:14px;line-height:18px;color:#919191;font-weight:bold;transform:scaleX(0.9240);transform-origin:0 0;">and</div><div class="a" style="left:632px;top:812.0px;width:149px;height:21px;border:1px solid #d0d0d0;border-radius:4px;overflow:hidden"></div><div class="t" style="left:637.6px;top:812.5px;font-size:14px;line-height:18px;color:#6a89aa;font-weight:bold;transform:scaleX(0.9346);transform-origin:0 0;">Low_temperature_a…</div><div class="t" style="left:786.3px;top:814.4px;font-size:13px;line-height:16px;color:#9a9a9a;transform:scaleX(0.9588);transform-origin:0 0;">equal</div><div class="a" style="left:822px;top:812.0px;width:105px;height:21px;border:1px solid #d0d0d0;border-radius:4px;overflow:hidden"></div><div class="t" style="left:826.7px;top:812.5px;font-size:14px;line-height:18px;color:#4fb4b9;font-weight:bold;transform:scaleX(0.9599);transform-origin:0 0;">Current device</div><div class="t" style="left:927.5px;top:814.7px;font-size:12px;line-height:15px;color:#9a9a9a;">.</div><div class="a" style="left:931px;top:812.0px;width:149px;height:21px;border:1px solid #d0d0d0;border-radius:4px;overflow:hidden"></div><div class="t" style="left:936.4px;top:812.5px;font-size:14px;line-height:18px;color:#4fb4b9;font-weight:bold;transform:scaleX(0.9346);transform-origin:0 0;">Low_temperature_a…</div><div class="t" style="left:1088.4px;top:812.5px;font-size:14px;line-height:18px;color:#919191;font-weight:bold;transform:scaleX(0.9281);transform-origin:0 0;">and</div><div class="a" style="left:632px;top:837.3px;width:134px;height:21px;border:1px solid #d0d0d0;border-radius:4px;overflow:hidden"></div><div class="t" style="left:637.6px;top:837.8px;font-size:14px;line-height:18px;color:#6a89aa;font-weight:bold;transform:scaleX(0.9504);transform-origin:0 0;">Low_voltage_alarm</div><div class="t" style="left:770.8px;top:839.7px;font-size:13px;line-height:16px;color:#9a9a9a;transform:scaleX(0.9934);transform-origin:0 0;">equal</div><div class="a" style="left:806px;top:837.3px;width:105px;height:21px;border:1px solid #d0d0d0;border-radius:4px;overflow:hidden"></div><div class="t" style="left:811.4px;top:837.8px;font-size:14px;line-height:18px;color:#4fb4b9;font-weight:bold;transform:scaleX(0.9650);transform-origin:0 0;">Current device</div><div class="t" style="left:912.7px;top:840.0px;font-size:12px;line-height:15px;color:#9a9a9a;">.</div><div class="a" style="left:916px;top:837.3px;width:134px;height:21px;border:1px solid #d0d0d0;border-radius:4px;overflow:hidden"></div><div class="t" style="left:920.7px;top:837.8px;font-size:14px;line-height:18px;color:#4fb4b9;font-weight:bold;transform:scaleX(0.9504);transform-origin:0 0;">Low_voltage_alarm</div><div class="t" style="left:1058.3px;top:837.8px;font-size:14px;line-height:18px;color:#919191;font-weight:bold;transform:scaleX(0.9240);transform-origin:0 0;">and</div><div class="a" style="left:632px;top:862.6px;width:149px;height:21px;border:1px solid #d0d0d0;border-radius:4px;overflow:hidden"></div><div class="t" style="left:637.6px;top:863.1px;font-size:14px;line-height:18px;color:#6a89aa;font-weight:bold;transform:scaleX(0.9565);transform-origin:0 0;">Temperature_alarm…</div><div class="t" style="left:786.3px;top:865.0px;font-size:13px;line-height:16px;color:#9a9a9a;transform:scaleX(0.9588);transform-origin:0 0;">equal</div><div class="a" style="left:822px;top:862.6px;width:105px;height:21px;border:1px solid #d0d0d0;border-radius:4px;overflow:hidden"></div><div class="t" style="left:826.7px;top:863.1px;font-size:14px;line-height:18px;color:#4fb4b9;font-weight:bold;transform:scaleX(0.9599);transform-origin:0 0;">Current device</div><div class="t" style="left:927.5px;top:865.3px;font-size:12px;line-height:15px;color:#9a9a9a;">.</div><div class="a" style="left:931px;top:862.6px;width:149px;height:21px;border:1px solid #d0d0d0;border-radius:4px;overflow:hidden"></div><div class="t" style="left:936.4px;top:863.1px;font-size:14px;line-height:18px;color:#4fb4b9;font-weight:bold;transform:scaleX(0.9565);transform-origin:0 0;">Temperature_alarm…</div><div class="t" style="left:1088.4px;top:863.1px;font-size:14px;line-height:18px;color:#919191;font-weight:bold;transform:scaleX(0.9281);transform-origin:0 0;">and</div><div class="a" style="left:595px;top:924px;width:846px;height:56px;background:#f8f8fa;border-radius:4px 4px 0 0;border-bottom:1px solid rgba(0,0,0,0.1)"></div><div class="t" style="left:611.5px;top:931.4px;font-size:12px;line-height:15px;color:rgba(0,0,0,0.38);transform:scaleX(1.0558);transform-origin:0 0;">Condition type</div><div class="t" style="left:611.5px;top:949.5px;font-size:16px;line-height:20px;color:rgba(0,0,0,0.38);transform:scaleX(1.0346);transform-origin:0 0;">Simple</div><svg class="a" style="left:1413px;top:949px" width="14" height="8"><polygon points="2,1 12,1 7,6" fill="rgba(0,0,0,0.38)"/></svg><div class="a" style="left:1399px;top:1010px;width:64px;height:36px;background:#e8eaf6;border-radius:4px"></div><div class="t" style="left:1412.5px;top:1017.9px;font-size:14px;line-height:18px;color:#3f51b5;font-weight:bold;transform:scaleX(0.9626);transform-origin:0 0;">Close</div>
</body></html>
